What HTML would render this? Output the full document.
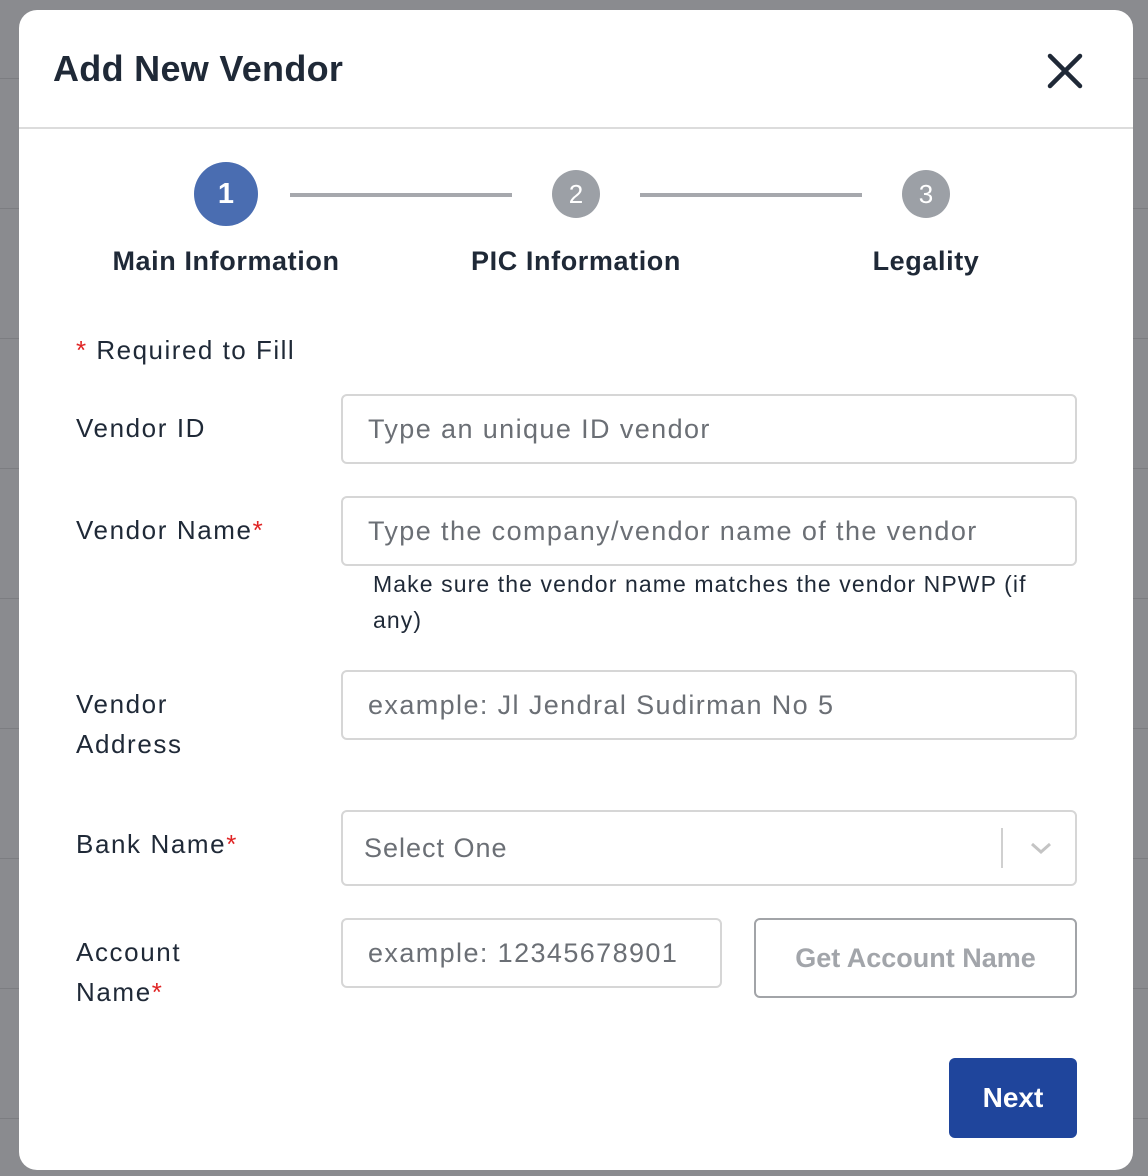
<!DOCTYPE html>
<html><head><meta charset="utf-8"><style>
*{box-sizing:border-box;margin:0;padding:0}
body{width:1148px;height:1176px;background:#8a8b8f;font-family:"Liberation Sans",Arial,sans-serif;position:relative;overflow:hidden;color:#1f2937}
.row{position:absolute;left:0;right:0;height:1px;background:#7c7d81}
.modal{position:absolute;left:19px;top:10px;width:1114px;height:1160px;background:#fff;border-radius:18px;overflow:hidden}
.hdr{height:119px;border-bottom:2px solid #dcdcdc;position:relative}
.hdr h1{position:absolute;left:34px;top:38px;font-size:36px;font-weight:700;color:#1f2937;letter-spacing:0.3px}
.close{position:absolute;left:1028px;top:43px}
.circ{position:absolute;width:64px;height:64px;border-radius:50%;color:#fff;font-size:29px;font-weight:700;text-align:center;line-height:64px}
.small{width:48px;height:48px;line-height:48px;font-size:26px;font-weight:400;background:#9ca0a6}
.line{position:absolute;height:4px;background:#a6a8ad;top:183px}
.slbl{position:absolute;top:246px;font-size:27px;font-weight:700;text-align:center;width:340px;letter-spacing:0.6px}
.abs{position:absolute}
.lbl{position:absolute;left:57px;font-size:26px;color:#1f2937;line-height:40px;letter-spacing:1.6px}
.req{color:#e02424}
.inp{position:absolute;border:2px solid #d6d6d6;border-radius:6px;font-size:27px;color:#6b6f75;padding-left:25px;display:flex;align-items:center;letter-spacing:1.4px}
</style></head><body>
<div class="row" style="top:78px"></div><div class="row" style="top:208px"></div><div class="row" style="top:338px"></div><div class="row" style="top:468px"></div><div class="row" style="top:598px"></div><div class="row" style="top:728px"></div><div class="row" style="top:858px"></div><div class="row" style="top:988px"></div><div class="row" style="top:1118px"></div>
<div class="modal">
<div class="hdr"><h1>Add New Vendor</h1>
<svg class="close" width="36" height="36" viewBox="0 0 36 36"><path d="M3 3L33 33M33 3L3 33" stroke="#1f2937" stroke-width="4.5" stroke-linecap="round"/></svg></div>
<div class="circ" style="left:175px;top:152px;background:#4a6db1">1</div>
<div class="line" style="left:271px;width:222px;top:183px"></div>
<div class="circ small" style="left:533px;top:160px">2</div>
<div class="line" style="left:621px;width:222px;top:183px"></div>
<div class="circ small" style="left:883px;top:160px">3</div>
<div class="slbl" style="left:37px;top:236px">Main Information</div>
<div class="slbl" style="left:387px;top:236px">PIC Information</div>
<div class="slbl" style="left:737px;top:236px">Legality</div>
<div class="lbl" style="top:320px;letter-spacing:1.5px"><span class="req">*</span> Required to Fill</div>
<div class="lbl" style="top:398px">Vendor ID</div>
<div class="inp" style="left:322px;top:384px;width:736px;height:70px">Type an unique ID vendor</div>
<div class="lbl" style="top:500px">Vendor Name<span class="req">*</span></div>
<div class="inp" style="left:322px;top:486px;width:736px;height:70px">Type the company/vendor name of the vendor</div>
<div class="abs" style="left:354px;top:556px;width:670px;font-size:23px;line-height:36px;color:#1f2937;letter-spacing:1.1px">Make sure the vendor name matches the vendor NPWP (if any)</div>
<div class="lbl" style="top:674px">Vendor<br>Address</div>
<div class="inp" style="left:322px;top:660px;width:736px;height:70px">example: Jl Jendral Sudirman No 5</div>
<div class="lbl" style="top:814px">Bank Name<span class="req">*</span></div>
<div class="inp" style="left:322px;top:800px;width:736px;height:76px;padding-left:21px;letter-spacing:1px">Select One
<div class="abs" style="left:658px;top:16px;width:2px;height:40px;background:#d0d0d0"></div>
<svg class="abs" style="left:686px;top:28px" width="24" height="16" viewBox="0 0 24 16"><path d="M3 4L12 12L21 4" stroke="#c4c4c4" stroke-width="3" fill="none"/></svg></div>
<div class="lbl" style="top:922px">Account<br>Name<span class="req">*</span></div>
<div class="inp" style="left:322px;top:908px;width:381px;height:70px">example: 12345678901</div>
<div class="abs" style="left:735px;top:908px;width:323px;height:80px;border:2px solid #a2a4a8;border-radius:6px;font-size:27px;font-weight:700;color:#a2a5aa;text-align:center;line-height:76px">Get Account Name</div>
<div class="abs" style="left:930px;top:1048px;width:128px;height:80px;background:#1f459c;border-radius:6px;color:#fff;font-size:28px;font-weight:700;text-align:center;line-height:80px">Next</div>
</div>
</body></html>
